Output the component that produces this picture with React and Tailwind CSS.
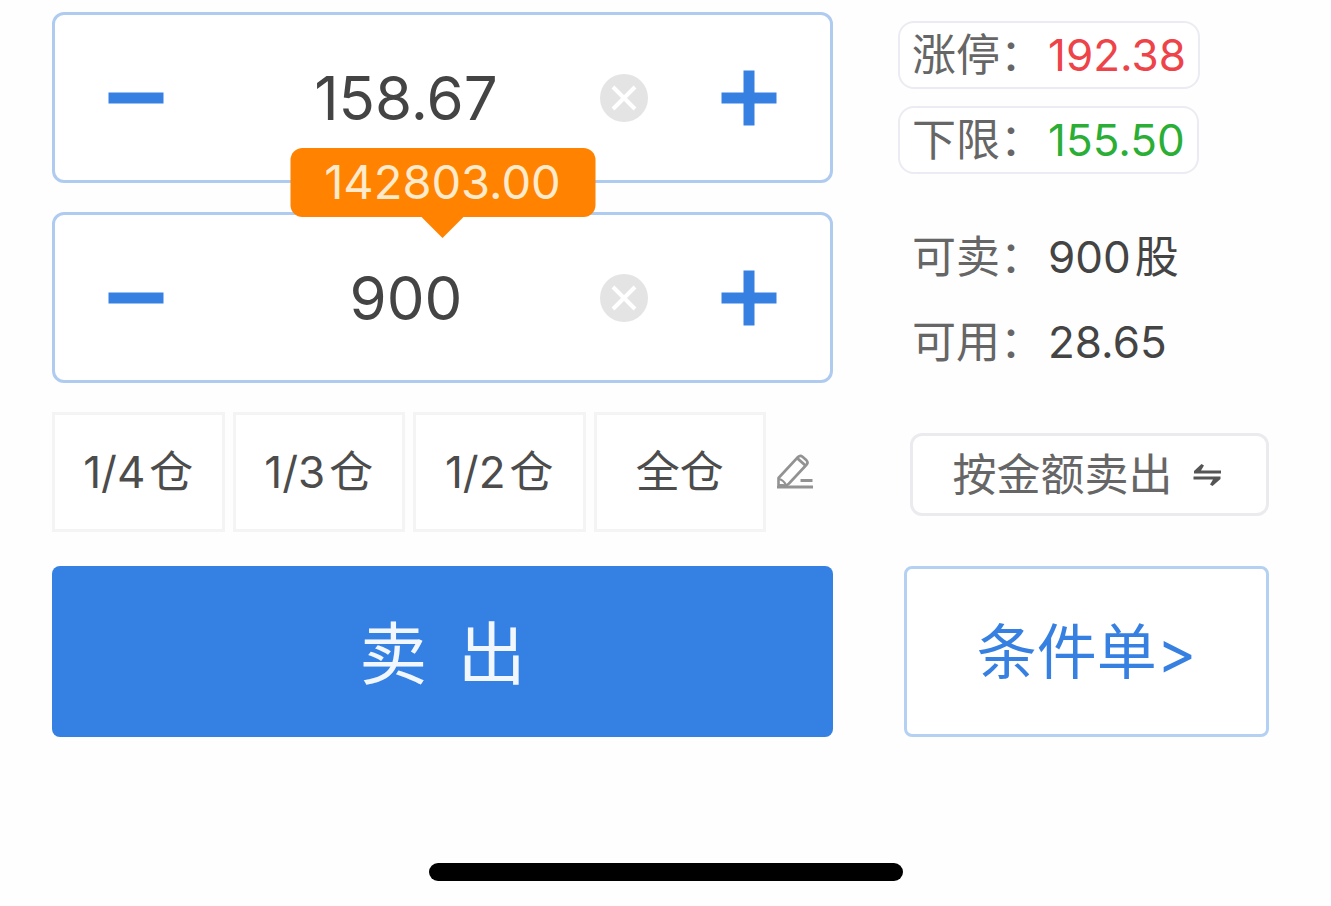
import { useState } from 'react';

// ── Order data ───────────────────────────────────────────────────────────────
const POSITIONS = [
  { id: 'quarter', ratio: '1/4', label: '仓', amount: 225 },
  { id: 'third', ratio: '1/3', label: '仓', amount: 300 },
  { id: 'half', ratio: '1/2', label: '仓', amount: 450 },
  { id: 'all', ratio: '', label: '全仓', amount: 900 },
];

const LIMITS = [
  { id: 'up', label: '涨停：', value: '192.38', color: 'text-[#ee4348]' },
  { id: 'down', label: '下限：', value: '155.50', color: 'text-[#2bae35]' },
];

const BALANCES = [
  { id: 'sellable', label: '可卖：', value: '900', unit: '股' },
  { id: 'available', label: '可用：', value: '28.65', unit: '' },
];

// ── Icons ────────────────────────────────────────────────────────────────────
function MinusIcon() {
  return (
    <svg viewBox="0 0 56 56" className="size-14" fill="#3680e2" aria-hidden="true">
      <path d="M0.5 22.5h55v11h-55z" />
    </svg>
  );
}

function PlusIcon() {
  return (
    <svg viewBox="0 0 56 56" className="size-14" fill="#3680e2" aria-hidden="true">
      <path d="M0.5 22.5h22v-22h11v22h22v11h-22v22h-11v-22h-22z" />
    </svg>
  );
}

function ClearIcon() {
  return (
    <svg viewBox="0 0 48 48" className="size-12" aria-hidden="true">
      <circle cx="24" cy="24" r="24" fill="#e4e4e4" />
      <path d="M13 13l22 22M35 13l-22 22" stroke="#fff" strokeWidth="4" />
    </svg>
  );
}

function PencilIcon() {
  return (
    <svg viewBox="0 0 38 38" className="size-[38px]" fill="none" stroke="#929292" strokeWidth="2.6" strokeLinejoin="round" aria-hidden="true">
      <path d="M2.5 32V25L22 4q2.200-2.200 4.500-.3l4 3.600q2 2 .2 4.200L13 30.500l-2.500 2z" />
      <path d="M21 5l9 8" strokeWidth="3" />
      <path d="M3 26q4.500 1 7 6" strokeWidth="2" />
      <path d="M1 34h36M24.500 27.500h12" strokeWidth="2.800" />
    </svg>
  );
}

function SwapIcon() {
  return (
    <svg viewBox="0 0 30 28" className="h-7 w-[30px]" fill="#555" aria-hidden="true">
      <path d="M8.500 3L11 4.500 8 9.500H28v3H1V10z" />
      <path d="M19.500 25L17 23.500l3-5H0.500v-3H27.500V18z" />
    </svg>
  );
}

// ── Number stepper ───────────────────────────────────────────────────────────
function Stepper({ label, value, onChange, step, digits, children }) {
  const shift = (delta) => onChange((Number(value) + delta).toFixed(digits));

  return (
    <div className="relative flex h-[171px] items-center rounded-xl border-3 border-[#afccf0] bg-white px-[53px]">
      <button type="button" aria-label={`${label}减少`} onClick={() => shift(-step)} className="shrink-0">
        <MinusIcon />
      </button>
      <input
        aria-label={label}
        value={value}
        onChange={(e) => onChange(e.target.value)}
        className="ml-12 h-20 min-w-0 flex-1 bg-transparent text-center text-[60px] text-[#444] outline-none"
      />
      <button type="button" aria-label={`${label}清空`} onClick={() => onChange('')} className="shrink-0">
        <ClearIcon />
      </button>
      <button type="button" aria-label={`${label}增加`} onClick={() => shift(step)} className="ml-[73px] shrink-0">
        <PlusIcon />
      </button>
      {children}
    </div>
  );
}

// ── Order total bubble ───────────────────────────────────────────────────────
function TotalBubble({ total }) {
  return (
    <div className="absolute -top-[67px] left-1/2 flex h-[69px] w-[305px] -translate-x-1/2 items-center justify-center rounded-xl bg-[#ff8200] text-[47px] text-[#ffeacb]">
      {total}
      <svg viewBox="0 0 42 21" className="absolute top-full left-1/2 h-[21px] w-[42px] -translate-x-1/2" fill="#ff8200" aria-hidden="true">
        <path d="M0 0h42L21 21z" />
      </svg>
    </div>
  );
}

export default function App() {
  const [price, setPrice] = useState('158.67');
  const [amount, setAmount] = useState('900');
  const total = (Number(price) * Number(amount)).toFixed(2);

  return (
    <main className="flex min-h-screen flex-col bg-[#fefefe] pt-3 font-[Inter,'Noto_Sans_CJK_SC',sans-serif]">
      <div className="grid grid-cols-[minmax(0,781fr)_minmax(0,371fr)] gap-x-[65px] pr-[62px] pl-[52px]">
        {/* Order form */}
        <section className="flex flex-col">
          <Stepper label="价格" value={price} onChange={setPrice} step={0.01} digits={2} />
          <div className="mt-[29px]">
            <Stepper label="数量" value={amount} onChange={setAmount} step={100} digits={0}>
              <TotalBubble total={total} />
            </Stepper>
          </div>

          <div className="mt-[29px] flex h-[120px] items-center">
            <div className="flex h-full flex-1 gap-2">
              {POSITIONS.map((p) => (
                <button
                  key={p.id}
                  type="button"
                  onClick={() => setAmount(String(p.amount))}
                  className="flex flex-1 items-center justify-center gap-1 border-3 border-[#f4f4f4] bg-white text-[44px] text-[#4c4c4c]"
                >
                  {p.ratio && <span>{p.ratio}</span>}
                  <span>{p.label}</span>
                </button>
              ))}
            </div>
            <button type="button" aria-label="编辑仓位" className="mr-[19px] ml-[10px] shrink-0">
              <PencilIcon />
            </button>
          </div>

          <button type="button" className="mt-[34px] h-[171px] rounded-lg bg-[#3480e3] pb-1 text-[68px] text-[#f2f7fe] font-['Noto_Sans_CJK_SC',sans-serif]">
            卖&nbsp;&nbsp;出
          </button>
        </section>

        {/* Quote and balance */}
        <aside className="flex flex-col pt-[9px] text-[44px] text-[#666]">
          <div className="flex flex-col items-start gap-[17px]">
            {LIMITS.map((l) => (
              <button key={l.id} type="button" className="flex h-[68px] items-center gap-1 rounded-2xl border-2 border-[#ebebf3] bg-white px-3 whitespace-nowrap">
                <span>{l.label}</span>
                <span className={l.color}>{l.value}</span>
              </button>
            ))}
          </div>

          <dl className="mt-[49px] flex flex-col gap-[17px] px-[14px]">
            {BALANCES.map((b) => (
              <div key={b.id} className="flex h-[68px] items-center gap-1 whitespace-nowrap">
                <dt>{b.label}</dt>
                <dd className="flex gap-1 text-[#444]">
                  <span>{b.value}</span>
                  {b.unit && <span>{b.unit}</span>}
                </dd>
              </div>
            ))}
          </dl>

          <button type="button" className="mt-[57px] ml-3 flex h-[83px] items-center justify-center gap-5 rounded-xl border-3 border-[#ebebef] bg-white pr-1 whitespace-nowrap">
            按金额卖出
            <SwapIcon />
          </button>
          <button type="button" className="mt-[50px] ml-[6px] h-[171px] rounded-lg border-3 border-[#b4d0f3] bg-white text-[60px] whitespace-nowrap text-[#3680e2]">
            条件单&gt;
          </button>
        </aside>
      </div>

      {/* Home indicator */}
      <div className="mt-auto mb-[25px] h-[18px] w-[474px] self-center rounded-full bg-black" />
    </main>
  );
}
